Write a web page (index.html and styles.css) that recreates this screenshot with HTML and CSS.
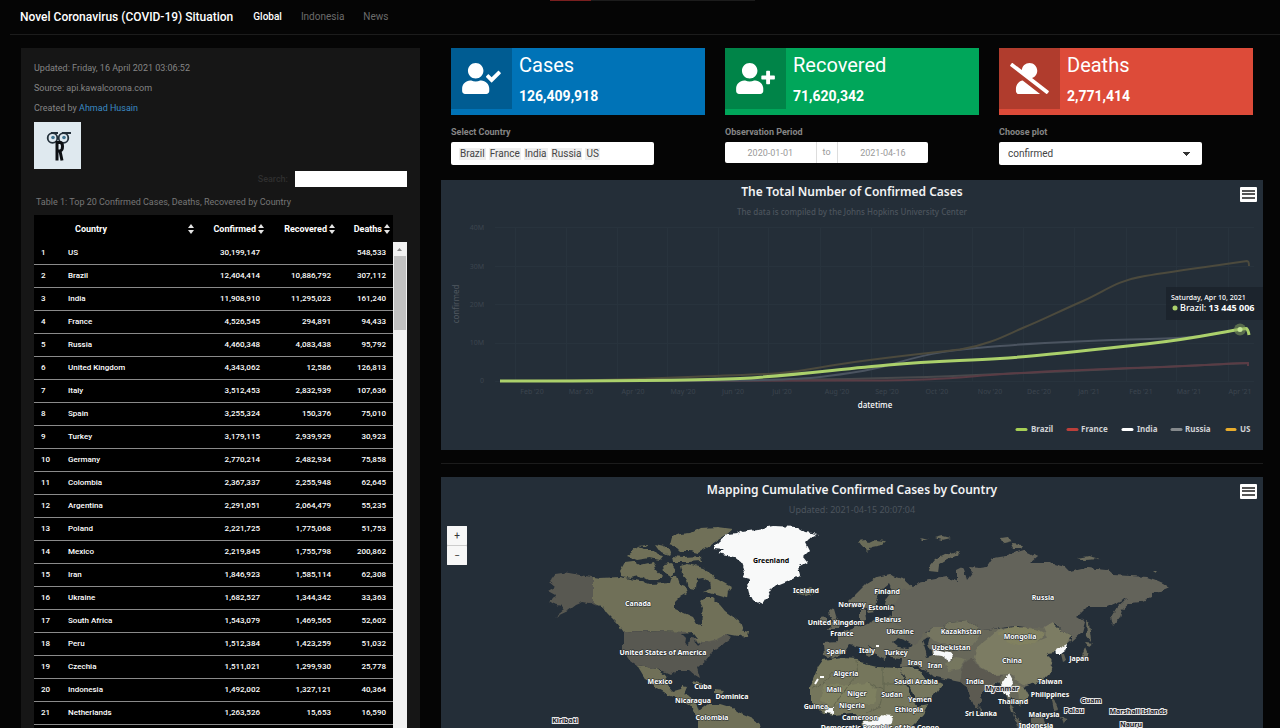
FILE: index.html
```html
<!DOCTYPE html>
<html lang="en">
<head>
<meta charset="utf-8">
<title>Novel Coronavirus (COVID-19) Situation</title>
<link rel="stylesheet" href="styles.css">
</head>
<body>
<div class="progress"></div>
<header class="navbar">
  <h1 class="brand">Novel Coronavirus (COVID-19) Situation</h1>
  <nav class="tabs">
    <a href="#global" class="tab active">Global</a>
    <a href="#indonesia" class="tab">Indonesia</a>
    <a href="#news" class="tab">News</a>
  </nav>
</header>
<div class="layout">
  <aside class="sidebar">
    <p class="meta">Updated: Friday, 16 April 2021 03:06:52</p>
    <p class="meta">Source: api.kawalcorona.com</p>
    <p class="meta">Created by <a href="#author">Ahmad Husain</a></p>
    <svg class="logo" viewBox="0 0 47 47" role="img" aria-label="Logo">
      <rect width="47" height="47" fill="#dfe9ef"/>
      <g fill="none" stroke="#23303a" stroke-width="1.8">
        <circle cx="18.500" cy="16" r="4.800"/><circle cx="29.500" cy="16" r="4.800"/>
        <path d="M17 11H24M28 11H37"/>
      </g>
      <circle cx="19" cy="15.500" r="1.800" fill="#3f7390"/><circle cx="30" cy="15.500" r="1.800" fill="#3f7390"/>
      <path d="M23 19V38.500M23 20.500H26Q28.500 20.500 28.500 24.500T26 29H23M26 29L28 38.500" fill="none" stroke="#0c0f12" stroke-width="3"/>
    </svg>
    <div class="search">
      <label for="search">Search:</label>
      <input id="search" type="search">
    </div>
    <div class="table-wrap">
      <table>
        <caption>Table 1: Top 20 Confirmed Cases, Deaths, Recovered by Country</caption>
        <colgroup><col class="c-no"><col class="c-country"><col class="c-conf"><col class="c-rec"><col class="c-death"></colgroup>
        <thead><tr><th></th>
          <th><span class="head wide">Country<svg class="sort" viewBox="0 0 6 10"><path d="M0 4L3 0L6 4ZM0 6H6L3 10Z"/></svg></span></th>
          <th><span class="head">Confirmed<svg class="sort" viewBox="0 0 6 10"><path d="M0 4L3 0L6 4ZM0 6H6L3 10Z"/></svg></span></th>
          <th><span class="head">Recovered<svg class="sort" viewBox="0 0 6 10"><path d="M0 4L3 0L6 4ZM0 6H6L3 10Z"/></svg></span></th>
          <th><span class="head">Deaths<svg class="sort" viewBox="0 0 6 10"><path d="M0 4L3 0L6 4ZM0 6H6L3 10Z"/></svg></span></th></tr></thead>
        <tbody>
          <tr><td>1</td><td>US</td><td>30,199,147</td><td></td><td>548,533</td></tr>
          <tr><td>2</td><td>Brazil</td><td>12,404,414</td><td>10,886,792</td><td>307,112</td></tr>
          <tr><td>3</td><td>India</td><td>11,908,910</td><td>11,295,023</td><td>161,240</td></tr>
          <tr><td>4</td><td>France</td><td>4,526,545</td><td>294,891</td><td>94,433</td></tr>
          <tr><td>5</td><td>Russia</td><td>4,460,348</td><td>4,083,438</td><td>95,792</td></tr>
          <tr><td>6</td><td>United Kingdom</td><td>4,343,062</td><td>12,586</td><td>126,813</td></tr>
          <tr><td>7</td><td>Italy</td><td>3,512,453</td><td>2,832,939</td><td>107,636</td></tr>
          <tr><td>8</td><td>Spain</td><td>3,255,324</td><td>150,376</td><td>75,010</td></tr>
          <tr><td>9</td><td>Turkey</td><td>3,179,115</td><td>2,939,929</td><td>30,923</td></tr>
          <tr><td>10</td><td>Germany</td><td>2,770,214</td><td>2,482,934</td><td>75,858</td></tr>
          <tr><td>11</td><td>Colombia</td><td>2,367,337</td><td>2,255,948</td><td>62,645</td></tr>
          <tr><td>12</td><td>Argentina</td><td>2,291,051</td><td>2,064,479</td><td>55,235</td></tr>
          <tr><td>13</td><td>Poland</td><td>2,221,725</td><td>1,775,068</td><td>51,753</td></tr>
          <tr><td>14</td><td>Mexico</td><td>2,219,845</td><td>1,755,798</td><td>200,862</td></tr>
          <tr><td>15</td><td>Iran</td><td>1,846,923</td><td>1,585,114</td><td>62,308</td></tr>
          <tr><td>16</td><td>Ukraine</td><td>1,682,527</td><td>1,344,342</td><td>33,363</td></tr>
          <tr><td>17</td><td>South Africa</td><td>1,543,079</td><td>1,469,565</td><td>52,602</td></tr>
          <tr><td>18</td><td>Peru</td><td>1,512,384</td><td>1,423,259</td><td>51,032</td></tr>
          <tr><td>19</td><td>Czechia</td><td>1,511,021</td><td>1,299,930</td><td>25,778</td></tr>
          <tr><td>20</td><td>Indonesia</td><td>1,492,002</td><td>1,327,121</td><td>40,364</td></tr>
          <tr><td>21</td><td>Netherlands</td><td>1,263,526</td><td>15,653</td><td>16,590</td></tr>
          <tr><td></td><td></td><td></td><td></td><td></td></tr>
        </tbody>
      </table>
      <div class="scrollbar"><svg class="scroll-up" viewBox="0 0 13 14"><path d="M4 9L6.500 6L9 9Z" fill="#888"/></svg><div class="thumb"></div></div>
    </div>
  </aside>
  <main class="main">
    <section class="columns">
      <div class="column">
        <div class="card blue">
          <div class="card-icon"><svg viewBox="0 0 640 512"><path d="M224 256c70.700 0 128-57.300 128-128S294.700 0 224 0 96 57.300 96 128s57.300 128 128 128zm89.600 32h-16.700c-22.200 10.200-46.900 16-72.900 16s-50.600-5.800-72.900-16h-16.700C60.200 288 0 348.200 0 422.400V464c0 26.500 21.500 48 48 48h352c26.500 0 48-21.500 48-48v-41.600c0-74.200-60.200-134.400-134.400-134.400zm323-128.400l-27.800-28.100c-4.600-4.700-12.100-4.700-16.800-.1l-104.800 104-45.500-45.800c-4.600-4.700-12.100-4.700-16.800-.1l-28.100 27.900c-4.700 4.600-4.700 12.100-.1 16.800l81.700 82.300c4.600 4.700 12.100 4.700 16.800.1l141.300-140.200c4.600-4.700 4.700-12.200.1-16.800z"/></svg></div>
          <div class="card-text"><h2>Cases</h2><strong>126,409,918</strong></div>
        </div>
        <label class="field-label" for="country">Select Country</label>
        <div class="control tags"><span>Brazil</span><span>France</span><span>India</span><span>Russia</span><span>US</span><input id="country" type="text"></div>
      </div>
      <div class="column">
        <div class="card green">
          <div class="card-icon"><svg viewBox="0 0 640 512"><path d="M624 208h-64v-64c0-8.800-7.200-16-16-16h-32c-8.800 0-16 7.200-16 16v64h-64c-8.800 0-16 7.200-16 16v32c0 8.800 7.200 16 16 16h64v64c0 8.800 7.200 16 16 16h32c8.800 0 16-7.200 16-16v-64h64c8.800 0 16-7.200 16-16v-32c0-8.800-7.200-16-16-16zM224 256c70.700 0 128-57.300 128-128S294.700 0 224 0 96 57.300 96 128s57.300 128 128 128zm89.600 32h-16.700c-22.200 10.200-46.900 16-72.900 16s-50.600-5.800-72.900-16h-16.700C60.200 288 0 348.200 0 422.400V464c0 26.500 21.500 48 48 48h352c26.500 0 48-21.500 48-48v-41.600c0-74.200-60.200-134.400-134.400-134.400z"/></svg></div>
          <div class="card-text"><h2>Recovered</h2><strong>71,620,342</strong></div>
        </div>
        <label class="field-label" for="from">Observation Period</label>
        <div class="control dates"><input id="from" type="text" value="2020-01-01"><span>to</span><input type="text" value="2021-04-16" aria-label="End date"></div>
      </div>
      <div class="column">
        <div class="card red">
          <div class="card-icon"><svg viewBox="0 0 640 512"><path d="M633.800 458.100L362.300 248.300C412.100 230.700 448 183.800 448 128 448 57.300 390.700 0 320 0c-67.100 0-121.500 51.800-126.900 117.400L45.500 3.400C38.500-2 28.500-.8 23 6.200L3.400 31.400c-5.400 7-4.200 17 2.800 22.400l588.400 454.700c7 5.400 17 4.200 22.500-2.800l19.600-25.300c5.500-6.900 4.200-17-2.900-22.300zM96 422.400V464c0 26.500 21.500 48 48 48h350.200L207.400 290.300C144.200 301.300 96 356 96 422.400z"/></svg></div>
          <div class="card-text"><h2>Deaths</h2><strong>2,771,414</strong></div>
        </div>
        <label class="field-label" for="plot">Choose plot</label>
        <select id="plot" class="control plot"><option>confirmed</option></select>
      </div>
    </section>

    <section class="panel">
      <button class="menu" aria-label="Chart menu"><span></span><span></span><span></span></button>
      <svg class="chart" viewBox="441 180 822 270">
        <g stroke="#28333d" stroke-width="1">
          <path d="M495 227.500H1254M495 266.500H1254M495 304.500H1254M495 343.500H1254M495 381.500H1254"/>
          <path d="M515.500 228V381M566.500 228V381M617.500 228V381M667.500 228V381M718.500 228V381M768.500 228V381M820.500 228V381M871.500 228V381M923.500 228V381M972.500 228V381M1023.500 228V381M1074.500 228V381M1126.500 228V381M1176.500 228V381M1228.500 228V381"/>
        </g>
        <text class="title" x="852" y="196">The Total Number of Confirmed Cases</text>
        <text class="subtitle" x="852" y="215">The data is compiled by the Johns Hopkins University Center</text>
        <g class="axis end">
          <text x="484" y="230">40M</text><text x="484" y="269">30M</text><text x="484" y="307">20M</text><text x="484" y="345">10M</text><text x="484" y="383">0</text>
        </g>
        <g class="axis">
          <text x="532" y="394">Feb '20</text><text x="581" y="394">Mar '20</text><text x="633" y="394">Apr '20</text><text x="683" y="394">May '20</text><text x="733" y="394">Jun '20</text><text x="782" y="394">Jul '20</text><text x="837" y="394">Aug '20</text><text x="887" y="394">Sep '20</text><text x="937" y="394">Oct '20</text><text x="990" y="394">Nov '20</text><text x="1039" y="394">Dec '20</text><text x="1089" y="394">Jan '21</text><text x="1141" y="394">Feb '21</text><text x="1189" y="394">Mar '21</text><text x="1240" y="394">Apr '21</text>
        </g>
        <text class="ytitle" transform="translate(459 304) rotate(-90)">confirmed</text>
        <text class="xtitle" x="875" y="408">datetime</text>
        <g fill="none" stroke-linejoin="round">
          <path stroke="#48494c" stroke-width="2" d="M500 381C700 381 760 380.500 850 379S1000 374 1060 371.500S1180 366 1249 363"/>
          <path stroke="#5a3c45" stroke-width="2" d="M500 381C700 381.500 780 381 860 380.500S950 378 990 375S1100 369 1150 367.500S1230 363 1248 363V366"/>
          <path stroke="#4b5460" stroke-width="2" d="M500 381C700 381 790 381 820 377S870 371 900 362S950 350 1000 346S1090 340.500 1150 339S1210 334 1248 328"/>
          <path stroke="#4c4a3d" stroke-width="2" d="M500 381C600 381 640 379 700 376.500S780 375 820 367.500S900 356 960 349.500C990 345 1010 333 1025 327S1060 311 1083 301S1115 281 1145 276S1220 265 1247 261Q1249 261 1249 266"/>
          <path stroke="#abd06b" stroke-width="3" d="M500 381C600 381 690 381 740 378.500S840 369 888 365S960 361 1000 358.500S1100 349 1150 343.500S1220 332 1246 328.500Q1248 329 1249 335"/>
        </g>
        <circle cx="1240" cy="329.500" r="6" fill="#8aa75f" opacity=".5"/><circle cx="1240" cy="329.500" r="2.500" fill="#c5e596"/>
        <rect x="1166" y="287" width="97" height="33" fill="#1c232c" opacity=".9"/>
        <text class="tip-date" x="1171" y="300">Saturday, Apr 10, 2021</text>
        <circle cx="1175" cy="308" r="2.500" fill="#abd06b"/>
        <text class="tip" x="1180" y="311">Brazil: <tspan font-weight="700">13 445 006</tspan></text>
        <g stroke-width="3" stroke-linecap="round">
          <path stroke="#a6cf55" d="M1017 429.500H1026"/><path stroke="#bb3f3a" d="M1068 429.500H1077"/><path stroke="#fff" d="M1123 429.500H1132"/><path stroke="#85898c" d="M1172 429.500H1181"/><path stroke="#e8ac2c" d="M1227 429.500H1235"/>
        </g>
        <g class="legend"><text x="1031" y="432">Brazil</text><text x="1081" y="432">France</text><text x="1137" y="432">India</text><text x="1185" y="432">Russia</text><text x="1240" y="432">US</text></g>
      </svg>
    </section>
    <hr>
    <section class="panel">
      <button class="menu" aria-label="Map menu"><span></span><span></span><span></span></button>
      <div class="zoom"><button aria-label="Zoom in">+</button><button aria-label="Zoom out">−</button></div>
      <svg class="chart" viewBox="441 477 822 270">
        <defs>
          <filter id="coast" x="-2%" y="-2%" width="104%" height="104%"><feTurbulence type="fractalNoise" baseFrequency=".15" numOctaves="2" seed="4"/><feDisplacementMap in="SourceGraphic" scale="5" xChannelSelector="R" yChannelSelector="G"/></filter>
        </defs>
        <text class="title" x="852" y="494">Mapping Cumulative Confirmed Cases by Country</text>
        <text class="subtitle wide" x="852" y="513">Updated: 2021-04-15 20:07:04</text>
        <g filter="url(#coast)">
          <!-- North America -->
          <g fill="#6f7059">
            <path d="M593 577L600 578 620 577 640 581 650 584 670 583 672 576 677 576 680 584 685 586 687 593 680 597 675 602 675 609 684 613 693 617 697 624 701 625 702 615 703 607 700 601 704 598 713 598 719 604 725 611 732 616 740 622 744 633 738 636 727 634 722 640 710 645 702 647 693 643 685 632 623 631 617 623 607 613 603 607 593 603Z"/>
            <path d="M670 545L672 537 680 534 690 533 700 528 718 527 733 529 726 535 718 540 707 548 698 553 690 551 680 551 676 547Z"/>
            <path d="M680 566L688 564 703 568 710 572 715 578 722 582 731 587 728 591 727 598 720 596 710 593 703 591 711 588 710 582 703 578 697 579 696 589 689 588 687 580 682 574Z"/>
            <path d="M620 571L625 562 633 561 640 565 653 562 656 569 662 576 658 580 648 580 640 576 630 578 622 576ZM627 556L637 548 644 550 653 550 658 555 663 556 660 560 650 558 637 560ZM655 544L664 546 671 551 669 555 660 551ZM672 556L684 557 700 556 701 561 688 562 673 562ZM663 565L672 564 676 570 672 577 664 572ZM638 546L647 545 646 548Z"/>
            <path d="M637 665L657 669 665 675 668 686 673 692 680 690 682 686 687 687 684 694 691 698 696 702 699 711 708 704 720 704 733 708 740 713 752 718 760 725 766 747 698 747 698 718 690 705 680 699 668 695 656 688 648 678 644 672 653 685 646 680Z"/>
            <path d="M692 681L704 684 712 688 705 688 694 684ZM714 690L724 691 722 694 714 693ZM742 630L748 632 747 637 741 636Z"/>
          </g>
          <path fill="#595851" d="M555 574L566 572.500 580 575 593 577 593 603 599 606 589 603 583 602 576 605 568 611 555 617 564 610 561 606 553 604 548 601 557 596 548 591 555 587 549 582ZM623 631L685 632 693 637 700 643 715 640 727 634 732 637 722 645 712 652 706 660 697 668 700 678 695 675 690 671 675 671 670 675 657 669 637 665 630 660 623 650Z"/>
          <path fill="#242e38" d="M682 634L693 633 697 638 690 637 688 645 685 644 686 638ZM694 640L702 645 695 644Z"/>
          <path fill="#f8f9f9" d="M713 548L720 541 727 535 737 534 742 531 757 529 773 526 797 527 805 532 818 534 810 538 805 543 809 551 803 557 807 562 798 567 800 575 787 582 772 588 767 597 762 605 753 600 749 592 747 584 750 579 743 577 745 571 742 563 733 556 718 553 723 549Z"/>
          <path fill="#6b6c59" d="M796 588L803 590 811 588 815 592 806 596 799 594ZM858 541L866 540 870 543 876 540 886 541 882 545 872 547 868 552 864 548Z"/>
          <!-- Europe and Asia -->
          <path fill="#67675a" d="M848 602L857 593 867 583 877 577 890 574 903 578 916 590 928 620 925 633 980 630 1050 625 1072 640 1062 648 1047 653 1053 663 1050 673 1043 680 1030 685 1024 687 1028 694 1025 703 1019 706 1013 698 1010 701 1016 714 1011 711 1007 697 998 683 983 693 978 708 972 703 967 687 960 682 945 679 932 676 924 671 918 666 900 667 901 659 892 658 886 652 885 660 879 657 873 649 866 643 875 653 870 657 860 647 850 645 845 652 834 658 824 656 823 643 838 642 838 635 846 631 856 627 866 624 878 618 892 615 892 610 900 606 884 605 886 598 892 590 889 584 880 592 876 600 875 612 868 613 863 603 851 608Z"/>
          <path fill="#69695b" d="M829 608L834 609 836 616 841 624 838 629 829 629 833 622 830 616ZM821 618L827 617 827 624 821 626ZM860 608L865 610 866 620 860 621Z"/>
          <path fill="#64635a" d="M903 590L912 588 918 583 930 580 947 577 957 582 957 570 963 567 967 580 973 572 970 567 980 568 987 567 993 558 1005 556 1013 553 1023 550 1030 553 1037 557 1030 563 1050 563 1065 567 1070 572 1087 568 1107 570 1113 575 1147 577 1156 580 1163 583 1170 588 1160 592 1152 593 1152 597 1140 602 1130 603 1122 610 1120 617 1113 626 1111 617 1117 607 1127 598 1107 607 1087 607 1077 617 1085 622 1082 633 1072 642 1072 635 1063 632 1055 622 1048 628 1033 628 1017 626 1000 628 983 630 967 620 950 622 943 627 933 627 925 633 915 645 905 640 903 630 895 620 893 610 897 600Z"/>
          <path fill="#6b6b5b" d="M929 571L930 566 935 560 945 555 958 552 960 554 947 559 939 564 938 572ZM1001 537L1008 536 1012 542 1004 544ZM1011 544L1022 545 1020 548 1013 548ZM1077 558L1088 556 1100 559 1085 560ZM1153 571L1158 571 1156 573ZM921 538L928 540 923 540ZM935 538L943 536 951 538 942 540ZM1086 620L1089 622 1091 641 1087 636ZM1085 642L1094 643 1089 647ZM1085 648L1088 655 1086 661 1078 661 1082 656Z"/>
          <path fill="#747560" d="M926 633L933 627 943 627 950 622 967 620 983 630 976 641 970 647 957 645 946 645 934 641Z"/>
          <path fill="#7b7b63" d="M977 647L990 637 1000 628 1017 640 1035 642 1047 637 1043 628 1053 622 1063 632 1072 635 1067 645 1060 648 1055 652 1047 653 1052 662 1050 673 1043 680 1030 685 1023 684 1016 680 1010 674 993 675 980 667 974 657Z"/>
          <path fill="#818160" d="M997 633L1005 629 1014 627 1023 628 1035 630 1046 634 1035 643 1018 645 1007 641Z"/>
          <path fill="#5b5a51" d="M963 667L967 661 972 658 978 667 993 675 1003 675 998 683 990 685 983 693 978 708 972 703 967 687 960 682Z"/>
          <path fill="#76775f" d="M946 663L957 657 966 659 960 669 948 671ZM897 668L912 668 920 671 926 680 935 680 943 684 938 692 930 698 913 704 907 693 900 680ZM1016 685L1024 687 1028 695 1024 704 1018 699Z"/>
          <!-- Africa -->
          <path fill="#74765b" d="M823 660L843 657 857 658 860 663 877 667 897 668 903 683 912 700 917 707 928 705 923 715 908 730 905 747 866 747 862 720 853 713 833 715 820 712 810 700 810 687 818 667Z"/>
          <path fill="#7e8060" d="M824 684L850 685 867 683 877 690 874 704 851 704 832 706 820 700Z"/>
          <g fill="none" stroke="#62644f"><path d="M856 659L858 674 847 686M883 667V690M883 684H903M867 683L883 690 880 706 866 713M812 688L823 684 833 672M847 687L834 706"/></g>
          <g fill="#242e38"><path d="M893 643L898 638 906 641 913 645 908 648 898 647ZM922 640L930 637 928 645 933 655 927 657 925 648ZM925 670L932 676 938 680 930 679ZM900 668L915 698 912 700Z"/></g>
          <path fill="#606055" d="M1012 712L1021 722 1027 734 1018 727ZM1031 718L1041 714 1044 722 1039 734 1031 728ZM1051 695L1054 700 1058 710 1054 711ZM979 706L982 710 980 714ZM1060 654L1064 654 1066 660 1062 662ZM1060 717L1068 719 1063 725Z"/>
          <path fill="#f8f9f9" d="M933 650L941 650 948 652 954 656 949 661 941 656 934 655ZM1056 650L1067 644 1065 651 1061 654 1057 654ZM1008 673L1013 682 1009 688 1011 698 1006 694 1000 686 1004 680ZM824 707L834 707 834 714 825 713ZM863 721L876 720 882 715 893 716 892 724 885 730 865 730Z"/>
        </g>
        <path d="M815 684L818 679M820 677H824M876 646H879" stroke="#fff" stroke-width="2"/>
        <g class="place">
          <text x="638" y="606">Canada</text><text x="663" y="655">United States of America</text><text x="660" y="684">Mexico</text><text x="703" y="689">Cuba</text><text x="732" y="699">Dominica</text><text x="693" y="703">Nicaragua</text><text x="712" y="720">Colombia</text>
          <text x="806" y="593">Iceland</text><text x="887" y="594">Finland</text><text x="852" y="607">Norway</text><text x="881" y="610">Estonia</text><text x="836" y="625">United Kingdom</text><text x="888" y="622">Belarus</text><text x="842" y="636">France</text><text x="900" y="634">Ukraine</text><text x="836" y="654">Spain</text><text x="867" y="653">Italy</text><text x="896" y="655">Turkey</text><text x="915" y="665">Iraq</text><text x="935" y="668">Iran</text><text x="961" y="634">Kazakhstan</text><text x="951" y="650">Uzbekistan</text><text x="1043" y="600">Russia</text><text x="1020" y="639">Mongolia</text><text x="1012" y="663">China</text><text x="1079" y="661">Japan</text>
          <text x="846" y="676">Algeria</text><text x="834" y="692">Mali</text><text x="857" y="696">Niger</text><text x="892" y="697">Sudan</text><text x="916" y="684">Saudi Arabia</text><text x="920" y="702">Yemen</text><text x="816" y="709">Guinea</text><text x="852" y="708">Nigeria</text><text x="909" y="712">Ethiopia</text><text x="860" y="720">Cameroon</text><text x="880" y="730">Democratic Republic of the Congo</text>
          <text x="975" y="684">India</text><text x="981" y="716">Sri Lanka</text><text x="1050" y="684">Taiwan</text><text x="1050" y="697">Philippines</text><text x="1013" y="704">Thailand</text><text x="1044" y="717">Malaysia</text><text x="1036" y="728">Indonesia</text>
        </g>
        <g class="place outlined"><text x="565" y="723">Kiribati</text><text x="1002" y="691">Myanmar</text><text x="1091" y="703">Guam</text><text x="1074" y="713">Palau</text><text x="1138" y="714">Marshall Islands</text><text x="1131" y="727">Nauru</text></g>
        <text class="place dark" x="771" y="563">Greenland</text>
      </svg>
    </section>
  </main>
</div>
</body>
</html>
```
FILE: styles.css
```css
* { box-sizing: border-box; }
body { margin: 0; height: 100vh; overflow: hidden; background: #050505; color: #858585; font: 9px/12px Roboto, sans-serif; }
h1, h2, p { margin: 0; font-weight: 400; }
input, select, button { font: inherit; }
.progress { width: 16%; height: 1px; margin-left: 43%; background: linear-gradient(to right, #7a1f1f 20%, #1c1c1c 20%); }
.navbar { display: flex; align-items: center; gap: 20px; height: 34px; margin-left: 10px; padding: 0 0 2px 10px; border-bottom: 1px solid #1c1c1c; }
.brand { color: #fff; font-size: 12px; line-height: 16px; font-weight: 500; }
.tabs { display: flex; gap: 19px; }
.tab { color: #6c6c6c; font-size: 10px; text-decoration: none; }
.tab.active { color: #fff; font-weight: 500; }
.layout { display: flex; gap: 21px; padding: 13px 17px 0 21px; }
.sidebar { flex: 0 0 399px; background: #161616; padding: 14px 13px; height: 740px; }
.meta { margin-bottom: 8px; }
.meta a { color: #3a8ac4; text-decoration: none; }
.logo { display: block; width: 47px; height: 47px; }
.search { display: flex; justify-content: flex-end; align-items: center; gap: 7px; margin-top: 2px; color: #2f2f2f; font-weight: 500; }
.search input { width: 112px; height: 16px; border: 0; padding: 0 4px; background: #fff; }
.table-wrap { display: flex; align-items: flex-start; }
table { flex: 1; table-layout: fixed; border-collapse: separate; border-spacing: 0; color: #fff; }
caption { text-align: left; color: #777; padding: 9px 2px 7px; }
.c-no { width: 26px; } .c-country { width: 137px; } .c-conf { width: 70px; } .c-rec { width: 71px; } .c-death { width: 55px; }
thead tr { height: 27px; background: #000; }
th { padding: 0 3px 0 0; }
.head { display: flex; justify-content: flex-end; align-items: center; gap: 2px; font-weight: 700; }
.head.wide { justify-content: space-between; padding-left: 15px; }
.sort { width: 6px; height: 10px; fill: #e4e4e4; }
td { height: 23px; padding: 0 7px; background: #000; border-bottom: 1px solid #8a8a8a; text-align: right; font-size: 8px; font-weight: 500; }
td:nth-child(-n+2) { text-align: left; }
td:nth-child(2) { padding-left: 8px; }
.scrollbar { flex: 0 0 14px; margin: 55px 0 0; height: 520px; background: #f1f1f1; }
.scroll-up { display: block; width: 13px; height: 14px; }
.thumb { height: 74px; margin: 0 1px; background: #c1c1c1; }
.main { flex: 1; min-width: 0; }
.columns { display: grid; grid-template-columns: repeat(3, minmax(0, 1fr)); gap: 20px; padding: 0 10px; margin-bottom: 15px; }
.card { display: flex; gap: 7px; height: 67px; color: #fff; margin-bottom: 11px; }
.blue { background: #0073b7; } .green { background: #00a65a; } .red { background: #dd4b39; }
.card-icon { width: 61px; height: 61px; background: rgba(0, 0, 0, .2); display: flex; align-items: center; justify-content: center; }
.card-icon svg { width: 39px; height: 31px; fill: #fff; }
.card h2 { font-size: 20px; line-height: 24px; margin: 5px 0 11px; }
.card strong { display: block; font-size: 14px; line-height: 16px; }
.field-label { display: block; font-weight: 700; margin-bottom: 4px; }
.control { width: 80%; height: 23px; background: #fff; border: 0; border-radius: 2px; color: #444; font-size: 10px; }
.tags { display: flex; align-items: center; gap: 3px; padding: 0 8px; }
.tags span { background: #efefef; padding: 0 1px; }
.tags input { flex: 1; min-width: 0; border: 0; padding: 0; }
.dates { display: flex; align-items: center; height: 21px; color: #999; font-size: 9px; }
.dates input { flex: 1; min-width: 0; height: 21px; padding: 0; border: 0; background: none; text-align: center; color: #999; }
.dates span { width: 22px; line-height: 21px; text-align: center; border: solid #ddd; border-width: 0 1px; }
.plot { display: block; appearance: none; padding: 0 9px; background: linear-gradient(45deg, transparent 50%, #333 50%) right 15px center / 4px 4px no-repeat, linear-gradient(-45deg, transparent 50%, #333 50%) right 11px center / 4px 4px no-repeat, #fff; }
.panel { position: relative; background: #242e38; }
.chart { display: block; width: 100%; font-family: "Noto Sans", sans-serif; }
.menu { position: absolute; top: 7px; right: 6px; width: 17px; height: 15px; padding: 2px; border: 0; border-radius: 1px; background: #fff; display: flex; flex-direction: column; justify-content: space-around; }
.menu span { height: 2px; background: #555; }
.zoom { position: absolute; top: 49px; left: 6px; width: 20px; display: grid; gap: 1px; background: #ccc; }
.zoom button { height: 19px; border: 0; border-radius: 1px; padding: 0; background: #f7f7f7; color: #333; font-size: 10px; }
hr { border: 0; border-top: 1px solid #1c1c1c; margin: 13px 0; }
.title { font-size: 12px; font-weight: 600; fill: #f2f3f4; text-anchor: middle; }
.subtitle { font-size: 8px; font-weight: 500; fill: #4c545d; text-anchor: middle; }
.subtitle.wide { font-size: 9px; font-weight: 400; }
.axis { font-size: 7px; fill: #3c454f; text-anchor: middle; }
.axis.end { text-anchor: end; }
.ytitle { font-size: 8px; fill: #505860; text-anchor: middle; }
.xtitle { font-size: 8px; font-weight: 500; fill: #fff; text-anchor: middle; }
.tip-date { font-size: 7px; font-weight: 500; fill: #fff; }
.tip { font-size: 9px; font-weight: 500; fill: #fff; }
.legend { font-size: 8px; font-weight: 700; fill: #d0d2d4; }
.place { font-size: 7px; font-weight: 700; fill: #fff; text-anchor: middle; stroke: #22282c; stroke-width: 1px; paint-order: stroke; }
.outlined { fill: #1a2028; stroke: #e6e6e6; stroke-width: 2px; }
.dark { fill: #000; stroke: none; }
```
